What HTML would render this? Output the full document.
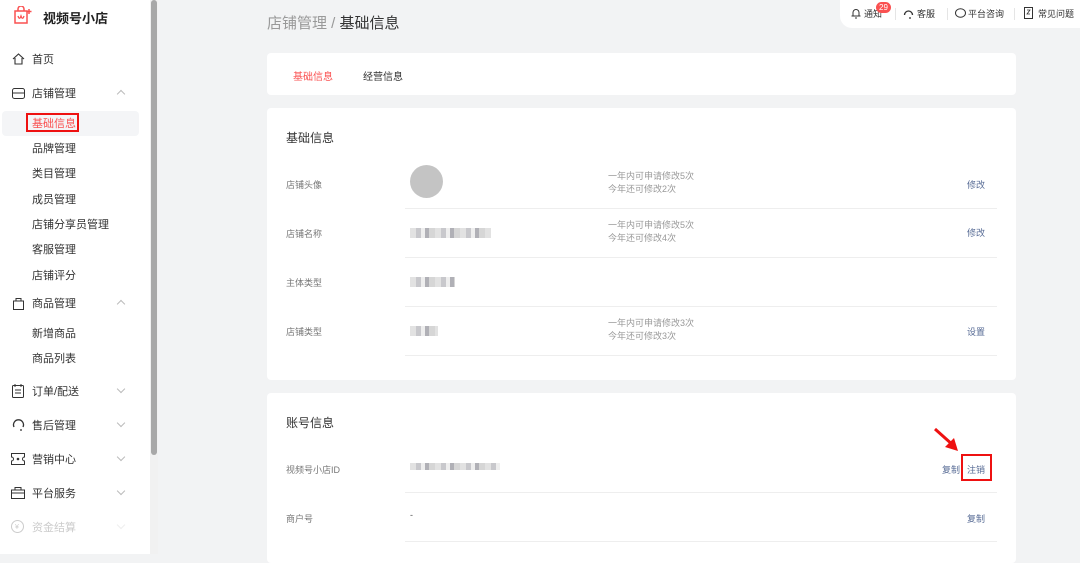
<!DOCTYPE html>
<html><head><meta charset="utf-8"><style>
*{margin:0;padding:0;box-sizing:border-box}
body{width:1080px;height:554px;overflow:hidden;background:#f2f3f4;font-family:"Liberation Sans","Noto Sans CJK SC",sans-serif;position:relative;color:#333}
.side{position:absolute;left:0;top:0;width:150px;height:554px;background:#fff}
.sb{position:absolute;left:150px;top:0;width:8px;height:554px;background:#f1f1f1}
.sb i{position:absolute;left:1px;top:0;width:6px;height:455px;background:#a8a8a8;border-radius:3px}
.it{position:absolute;font-size:11px;color:#333;white-space:nowrap}
.sub{left:32px}
.car{position:absolute;left:118px;width:6px;height:6px;border-left:1px solid #bbb;border-top:1px solid #bbb}
.up{transform:rotate(45deg)}.dn{transform:rotate(225deg)}
.card{position:absolute;left:267px;width:749px;background:#fff;border-radius:4px}
.lbl{position:absolute;left:19px;font-size:9px;color:#777}
.tip{position:absolute;left:341px;font-size:9px;color:#999;line-height:13px}
.lk{position:absolute;font-size:9px;color:#576b95}
.ln{position:absolute;left:138px;right:19px;height:1px;background:#eee}
.blur{position:absolute;height:10px;background:repeating-linear-gradient(90deg,#e2e2e2 0 6px,#c8c8cc 6px 11px,#eee 11px 15px,#b0b0b6 15px 19px,#d6d6d6 19px 25px)}
</style></head><body>
<div class="side">
<svg style="position:absolute;left:13px;top:6px" width="20" height="18" viewBox="0 0 20 18"><path d="M2 5h12v12H2z" fill="none" stroke="#fa5151" stroke-width="1.5"/><path d="M5 5V3a3 3 0 016 0v2" fill="none" stroke="#fa5151" stroke-width="1.5"/><path d="M5 10c1 3 2 3 3 0c1 3 2 3 3 0" fill="none" stroke="#fa5151" stroke-width="1.3"/><path d="M16 3v5M13.5 5.5h5" stroke="#fa5151" stroke-width="1.5"/></svg>
<div class="it" style="left:43px;top:8px;font-size:13px;font-weight:bold;color:#222">视频号小店</div>
<svg style="position:absolute;left:12px;top:53px" width="13" height="12" viewBox="0 0 13 12"><path d="M1 6L6.5 1 12 6M3 5v6h7V5" fill="none" stroke="#333" stroke-width="1.1"/></svg>
<div class="it" style="left:32px;top:51px">首页</div>
<svg style="position:absolute;left:12px;top:88px" width="13" height="11"><rect x=".5" y=".5" width="12" height="10" rx="2" fill="none" stroke="#333"/><path d="M1 5h11" stroke="#333"/></svg>
<div class="it" style="left:32px;top:85px">店铺管理</div><div class="car up" style="top:91px"></div>
<div style="position:absolute;left:2px;top:111px;width:137px;height:25px;background:#f4f5f7;border-radius:4px"></div>
<div style="position:absolute;left:26px;top:113px;width:53px;height:19px;border:2px solid #e11"></div>
<div class="it sub" style="top:115px;color:#fa5151">基础信息</div>
<div class="it sub" style="top:140px">品牌管理</div>
<div class="it sub" style="top:165px">类目管理</div>
<div class="it sub" style="top:191px">成员管理</div>
<div class="it sub" style="top:216px">店铺分享员管理</div>
<div class="it sub" style="top:241px">客服管理</div>
<div class="it sub" style="top:267px">店铺评分</div>
<svg style="position:absolute;left:13px;top:297px" width="11" height="13"><path d="M.5 4h10v8.5H.5zM3 4V1.5h5V4" fill="none" stroke="#333"/></svg>
<div class="it" style="left:32px;top:295px">商品管理</div><div class="car up" style="top:301px"></div>
<div class="it sub" style="top:325px">新增商品</div>
<div class="it sub" style="top:350px">商品列表</div>
<svg style="position:absolute;left:12px;top:384px" width="12" height="14"><rect x=".5" y="1.5" width="11" height="12" rx="1" fill="none" stroke="#333"/><path d="M3 6h6M3 9h6M3 0v3M9 0v3" stroke="#333"/></svg>
<div class="it" style="left:32px;top:383px">订单/配送</div><div class="car dn" style="top:386px"></div>
<svg style="position:absolute;left:12px;top:419px" width="13" height="12"><path d="M2 8A5 5 0 1 1 11 8M8 11h2" fill="none" stroke="#333" stroke-width="1.3"/></svg>
<div class="it" style="left:32px;top:417px">售后管理</div><div class="car dn" style="top:420px"></div>
<svg style="position:absolute;left:11px;top:453px" width="14" height="12"><path d="M.5 .5h13v3.5a2 2 0 000 4v3.5H.5V8a2 2 0 000-4z" fill="none" stroke="#333"/><circle cx="7" cy="6" r="1.3" fill="#333"/></svg>
<div class="it" style="left:32px;top:451px">营销中心</div><div class="car dn" style="top:454px"></div>
<svg style="position:absolute;left:11px;top:487px" width="14" height="12"><rect x=".5" y="3" width="13" height="8.5" fill="none" stroke="#333"/><path d="M4 3V.5h6V3M1 6h12" stroke="#333" fill="none"/></svg>
<div class="it" style="left:32px;top:485px">平台服务</div><div class="car dn" style="top:488px"></div>
<svg style="position:absolute;left:11px;top:520px" width="13" height="13"><circle cx="6.5" cy="6.5" r="6" fill="none" stroke="#ccc"/><text x="4" y="9" font-size="7" fill="#ccc">¥</text></svg>
<div class="it" style="left:32px;top:519px;color:#ccc">资金结算</div><div class="car dn" style="top:522px;border-color:#eee"></div>
</div>
<div class="sb"><i></i></div>
<div style="position:absolute;left:267px;top:12px;font-size:15px;color:#999">店铺管理 / <span style="color:#333">基础信息</span></div>
<div style="position:absolute;left:840px;top:0;width:250px;height:28px;background:#fff;border-radius:0 0 0 12px;font-size:9px;color:#333">
<svg style="position:absolute;left:11px;top:8px" width="10" height="11"><path d="M2 8V4.5a3 3 0 016 0V8h1.5H.5zM4 10h2" fill="none" stroke="#333"/></svg>
<span style="position:absolute;left:24px;top:7px">通知</span>
<span style="position:absolute;left:36px;top:2px;background:#fa5151;color:#fff;font-size:8px;border-radius:7px;padding:0 3px;line-height:11px">29</span>
<i style="position:absolute;left:55px;top:8px;width:1px;height:12px;background:#e5e5e5"></i>
<svg style="position:absolute;left:63px;top:8px" width="11" height="11"><path d="M1.5 7A4 4 0 1 1 9.5 7M6 10h2" fill="none" stroke="#333" stroke-width="1.3"/></svg>
<span style="position:absolute;left:77px;top:7px">客服</span>
<i style="position:absolute;left:107px;top:8px;width:1px;height:12px;background:#e5e5e5"></i>
<svg style="position:absolute;left:115px;top:8px" width="11" height="11"><ellipse cx="5.5" cy="5" rx="5" ry="4.2" fill="none" stroke="#333"/></svg>
<span style="position:absolute;left:128px;top:7px">平台咨询</span>
<i style="position:absolute;left:174px;top:8px;width:1px;height:12px;background:#e5e5e5"></i>
<svg style="position:absolute;left:184px;top:7px" width="9" height="12"><rect x=".5" y=".5" width="8" height="11" fill="none" stroke="#333"/><path d="M3 3h3L3 7h3" fill="none" stroke="#333" stroke-width=".8"/></svg>
<span style="position:absolute;left:198px;top:7px">常见问题</span>
</div>
<div class="card" style="top:53px;height:42px">
<span style="position:absolute;left:26px;top:15px;font-size:10px;color:#fa5151">基础信息</span>
<span style="position:absolute;left:96px;top:15px;font-size:10px;color:#333">经营信息</span>
</div>
<div class="card" style="top:108px;height:272px">
<div style="position:absolute;left:19px;top:21px;font-size:12px;color:#333">基础信息</div>
<div class="lbl" style="top:70px">店铺头像</div>
<div style="position:absolute;left:143px;top:57px;width:33px;height:33px;border-radius:50%;background:#c4c4c4"></div>
<div class="tip" style="top:62px">一年内可申请修改5次<br>今年还可修改2次</div>
<div class="lk" style="left:700px;top:70px">修改</div>
<div class="ln" style="top:100px"></div>
<div class="lbl" style="top:119px">店铺名称</div>
<div class="blur" style="left:143px;top:120px;width:81px"></div>
<div class="tip" style="top:111px">一年内可申请修改5次<br>今年还可修改4次</div>
<div class="lk" style="left:700px;top:118px">修改</div>
<div class="ln" style="top:149px"></div>
<div class="lbl" style="top:168px">主体类型</div>
<div class="blur" style="left:143px;top:169px;width:45px"></div>
<div class="ln" style="top:198px"></div>
<div class="lbl" style="top:217px">店铺类型</div>
<div class="blur" style="left:143px;top:218px;width:28px"></div>
<div class="tip" style="top:209px">一年内可申请修改3次<br>今年还可修改3次</div>
<div class="lk" style="left:700px;top:217px">设置</div>
<div class="ln" style="top:247px"></div>
</div>
<div class="card" style="top:393px;height:170px">
<div style="position:absolute;left:19px;top:21px;font-size:12px;color:#333">账号信息</div>
<div class="lbl" style="top:70px">视频号小店ID</div>
<div class="blur" style="left:143px;top:70px;width:90px;height:7px"></div>
<div class="lk" style="left:675px;top:70px">复制</div>
<div class="lk" style="left:700px;top:70px">注销</div>
<div style="position:absolute;left:694px;top:61px;width:31px;height:27px;border:2px solid #e11"></div>
<svg style="position:absolute;left:665px;top:33px" width="30" height="28"><path d="M3 3L22 20" stroke="#e11" stroke-width="3"/><path d="M26 25L13 21L22 12Z" fill="#e11"/></svg>
<div class="ln" style="top:99px"></div>
<div class="lbl" style="top:119px">商户号</div>
<div class="lbl" style="left:143px;top:117px;color:#555">-</div>
<div class="lk" style="left:700px;top:119px">复制</div>
<div class="ln" style="top:148px"></div>
</div>
</body></html>
